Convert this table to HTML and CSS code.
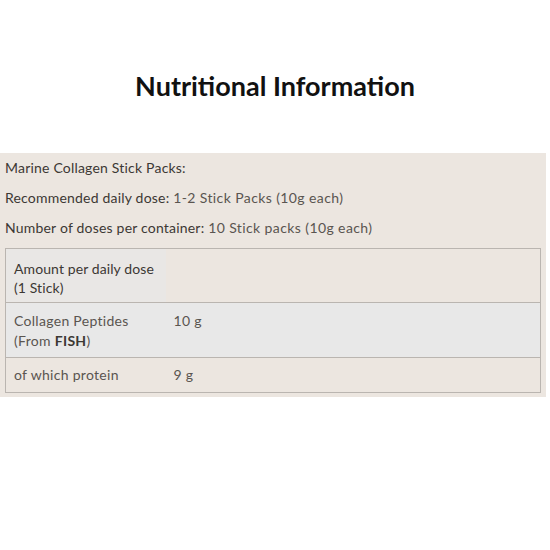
FILE: index.html
```html
<!DOCTYPE html>
<html>
<head>
<meta charset="utf-8">
<link rel="stylesheet" href="styles.css">
</head>
<body>
<h1 class="title">Nutritional Information</h1>
<section class="panel">
  <p class="line">Marine Collagen Stick Packs:</p>
  <p class="line">Recommended daily dose: <span class="val">1-2 Stick Packs (10g each)</span></p>
  <p class="line">Number of doses per container: <span class="val">10 Stick packs (10g each)</span></p>
  <table class="facts">
    <tr class="head">
      <td class="c1 headcell">Amount per daily dose<br>(1 Stick)</td>
      <td class="c2"></td>
    </tr>
    <tr class="gray">
      <td class="c1">Collagen Peptides<br>(From <b>FISH</b>)</td>
      <td class="c2">10 g</td>
    </tr>
    <tr class="beige">
      <td class="c1">of which protein</td>
      <td class="c2">9 g</td>
    </tr>
  </table>
</section>
</body>
</html>
```
FILE: styles.css
```css
html, body { margin: 0; padding: 0; background: #ffffff; }
body { width: 550px; height: 550px; font-family: Lato, "Noto Sans", sans-serif; }
.title {
  margin: 0;
  padding-top: 71px;
  height: 153px;
  box-sizing: border-box;
  line-height: 30px;
  text-align: center;
  font-size: 27px;
  font-weight: 700;
  color: #111;
}
.panel {
  width: 546px;
  background: #ece6e0;
  padding: 0 5px 4px 5px;
  box-sizing: border-box;
}
.line {
  margin: 0;
  height: 30px;
  line-height: 30px;
  font-size: 14px;
  color: #3c3834;
  letter-spacing: 0.2px;
}
.val { color: #5a5550; letter-spacing: 0.4px; }
.facts {
  width: 536px;
  border-collapse: collapse;
  border: 1px solid #bab5b0;
  margin-top: 5px;
  font-size: 14px;
  color: #5a5550;
  letter-spacing: 0.3px;
}
.facts td {
  border-top: 1px solid #bab5b0;
  border-bottom: 1px solid #bab5b0;
  padding: 0 0 0 8px;
  vertical-align: top;
  line-height: 20px;
  box-sizing: border-box;
}
.c1 { width: 160px; padding-left: 7px; }
.head td { height: 54px; padding-top: 10px; line-height: 19px; }
.headcell { background: #e9e7e5; color: #3c3834; letter-spacing: 0.1px; }
.gray td { background: #e8e8e8; height: 55px; padding-top: 8px; }
.gray b { font-weight: 700; color: #3c3834; }
.beige td { height: 35px; padding-top: 7px; }
```
